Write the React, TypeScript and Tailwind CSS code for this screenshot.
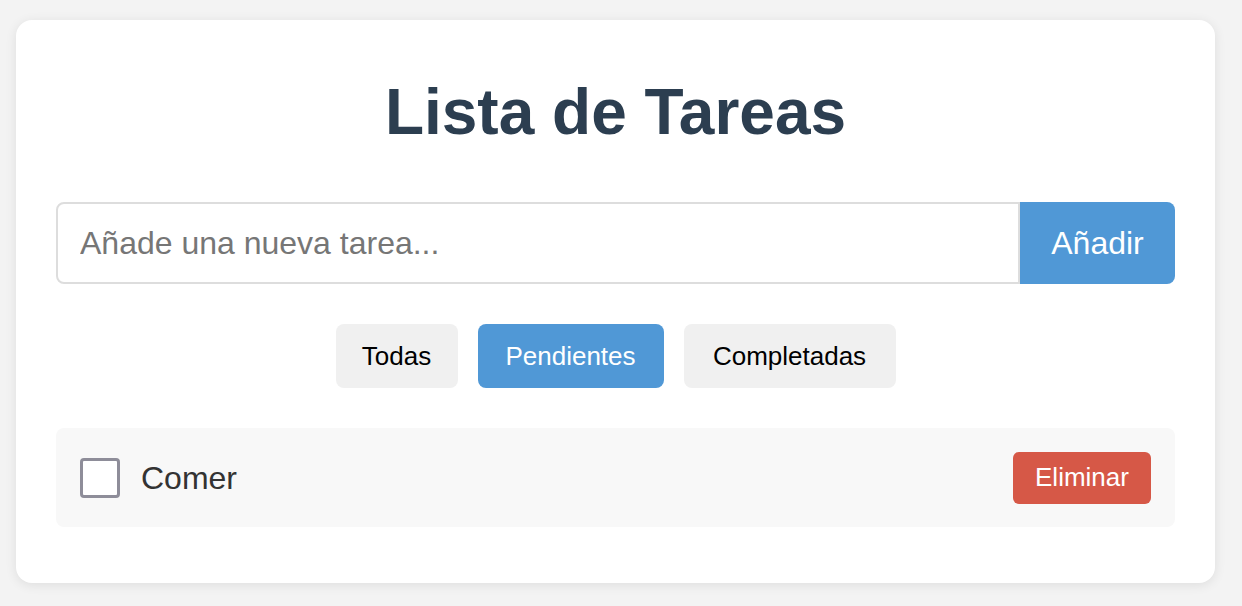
import React from "react";

export default function App() {
  return (
    <div className="min-h-[606px] w-full bg-[#f3f3f3] pl-[16px] pr-[27px] pt-[20px] pb-[23px]" style={{ fontFamily: '"Liberation Sans", Arial, sans-serif' }}>
      <div className="rounded-[16px] bg-white px-[40px] pt-[55px] pb-[56px] shadow-[0_2px_12px_rgba(0,0,0,0.09)]">
        <h1 className="text-center text-[64px] font-bold leading-[74px] text-[#2c3e50]">Lista de Tareas</h1>
        <div className="mt-[53px] flex h-[82px]">
          <input
            className="h-full flex-1 rounded-l-[8px] border-2 border-[#dddddd] px-[22px] text-[32px] text-[#333] outline-none placeholder:text-[#767676]"
            placeholder="Añade una nueva tarea..."
          />
          <button className="h-full w-[155px] rounded-r-[8px] bg-[#5098d6] text-[32px] text-white">Añadir</button>
        </div>
        <div className="mt-[40px] flex justify-center gap-[20px]">
          <button className="h-[64px] w-[122px] rounded-[8px] bg-[#f0f0f0] text-[26px] text-black">Todas</button>
          <button className="h-[64px] w-[186px] rounded-[8px] bg-[#5098d6] text-[26px] text-white">Pendientes</button>
          <button className="h-[64px] w-[212px] rounded-[8px] bg-[#f0f0f0] text-[26px] text-black">Completadas</button>
        </div>
        <div className="mt-[40px] flex h-[99px] items-center rounded-[8px] bg-[#f8f8f8] px-[24px]">
          <div className="h-[40px] w-[40px] rounded-[4px] border-[3px] border-[#8e8d99] bg-white" />
          <span className="ml-[21px] flex-1 text-[32px] text-[#333]">Comer</span>
          <button className="h-[52px] w-[138px] rounded-[6px] bg-[#d65847] text-[26px] text-white">Eliminar</button>
        </div>
      </div>
    </div>
  );
}
